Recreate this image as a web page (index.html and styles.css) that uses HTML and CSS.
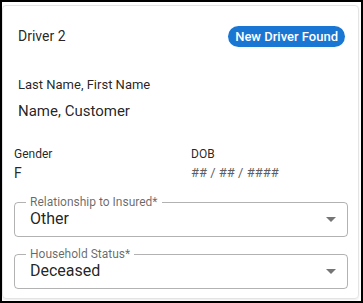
FILE: index.html
```html
<!DOCTYPE html>
<html>
  <head>
    <title>Driver 2</title>
    <link rel="stylesheet" href="styles.css">
  </head>
  <body>
    <div class="screen">
      <div class="card">
        <div class="card-header">
          <span class="card-title">Driver 2</span>
          <span class="badge">New Driver Found</span>
        </div>

        <div class="name-block">
          <div class="name-label">Last Name, First Name</div>
          <div class="name-value">Name, Customer</div>
        </div>

        <div class="details">
          <div class="info-grid">
            <div>
              <div class="info-label">Gender</div>
              <div class="info-value">F</div>
            </div>
            <div>
              <div class="info-label">DOB</div>
              <div class="info-value muted">## / ## / ####</div>
            </div>
          </div>

          <fieldset class="select-field">
            <legend>Relationship to Insured*</legend>
            <div class="select-value">Other</div>
            <svg class="select-arrow" viewBox="0 0 24 24" width="24" height="24"><path d="M7 10l5 5 5-5z"></path></svg>
          </fieldset>

          <fieldset class="select-field">
            <legend>Household Status*</legend>
            <div class="select-value">Deceased</div>
            <svg class="select-arrow" viewBox="0 0 24 24" width="24" height="24"><path d="M7 10l5 5 5-5z"></path></svg>
          </fieldset>
        </div>
      </div>
    </div>
  </body>
</html>
```

FILE: styles.css
```css
body { margin: 0; padding: 2px; background: #000; font-family: Roboto, "Liberation Sans", Arial, sans-serif; color: rgba(0, 0, 0, 0.87); }

.screen { width: 359px; height: 299px; box-sizing: border-box; background: #fff; padding-top: 3px; }

.card { margin-right: 2px; height: 294px; box-sizing: border-box; border: 1px solid #e4e4e4; border-radius: 4px; box-shadow: 0 1px 2px rgba(0, 0, 0, 0.08); }

.card-header { display: flex; justify-content: space-between; align-items: center; padding: 20px 13px 0 15px; }
.card-title { font-size: 14px; line-height: 21px; }
.badge { background: #1976d2; color: #fff; font-size: 13px; font-weight: 500; line-height: 21px; padding: 0 7px; border-radius: 11px; }

.name-block { padding: 30px 15px 0 15px; }
.name-label { font-size: 13px; line-height: 16px; }
.name-value { font-size: 15px; line-height: 20px; margin-top: 8px; }

.details { padding: 25px 10px 0 11px; }
.info-grid { display: grid; grid-template-columns: 177px 1fr; }
.info-label { font-size: 12px; line-height: 16px; }
.info-value { font-size: 14px; line-height: 20px; margin-top: 1px; }
.muted { color: #5f5f5f; font-size: 13px; }

.select-field { position: relative; margin: 10px 0 0 0; padding: 0 40px 7px 11px; border: 1px solid rgba(0, 0, 0, 0.3); border-radius: 4px; min-width: 0; }
.info-grid + .select-field { margin-top: 12px; }
.select-field legend { font-size: 12px; line-height: 14px; padding: 0 4px; color: rgba(0, 0, 0, 0.6); }
.select-value { font-size: 16px; line-height: 20px; padding-left: 4px; }
.select-arrow { position: absolute; right: 4px; top: -2px; fill: #757575; }
```
